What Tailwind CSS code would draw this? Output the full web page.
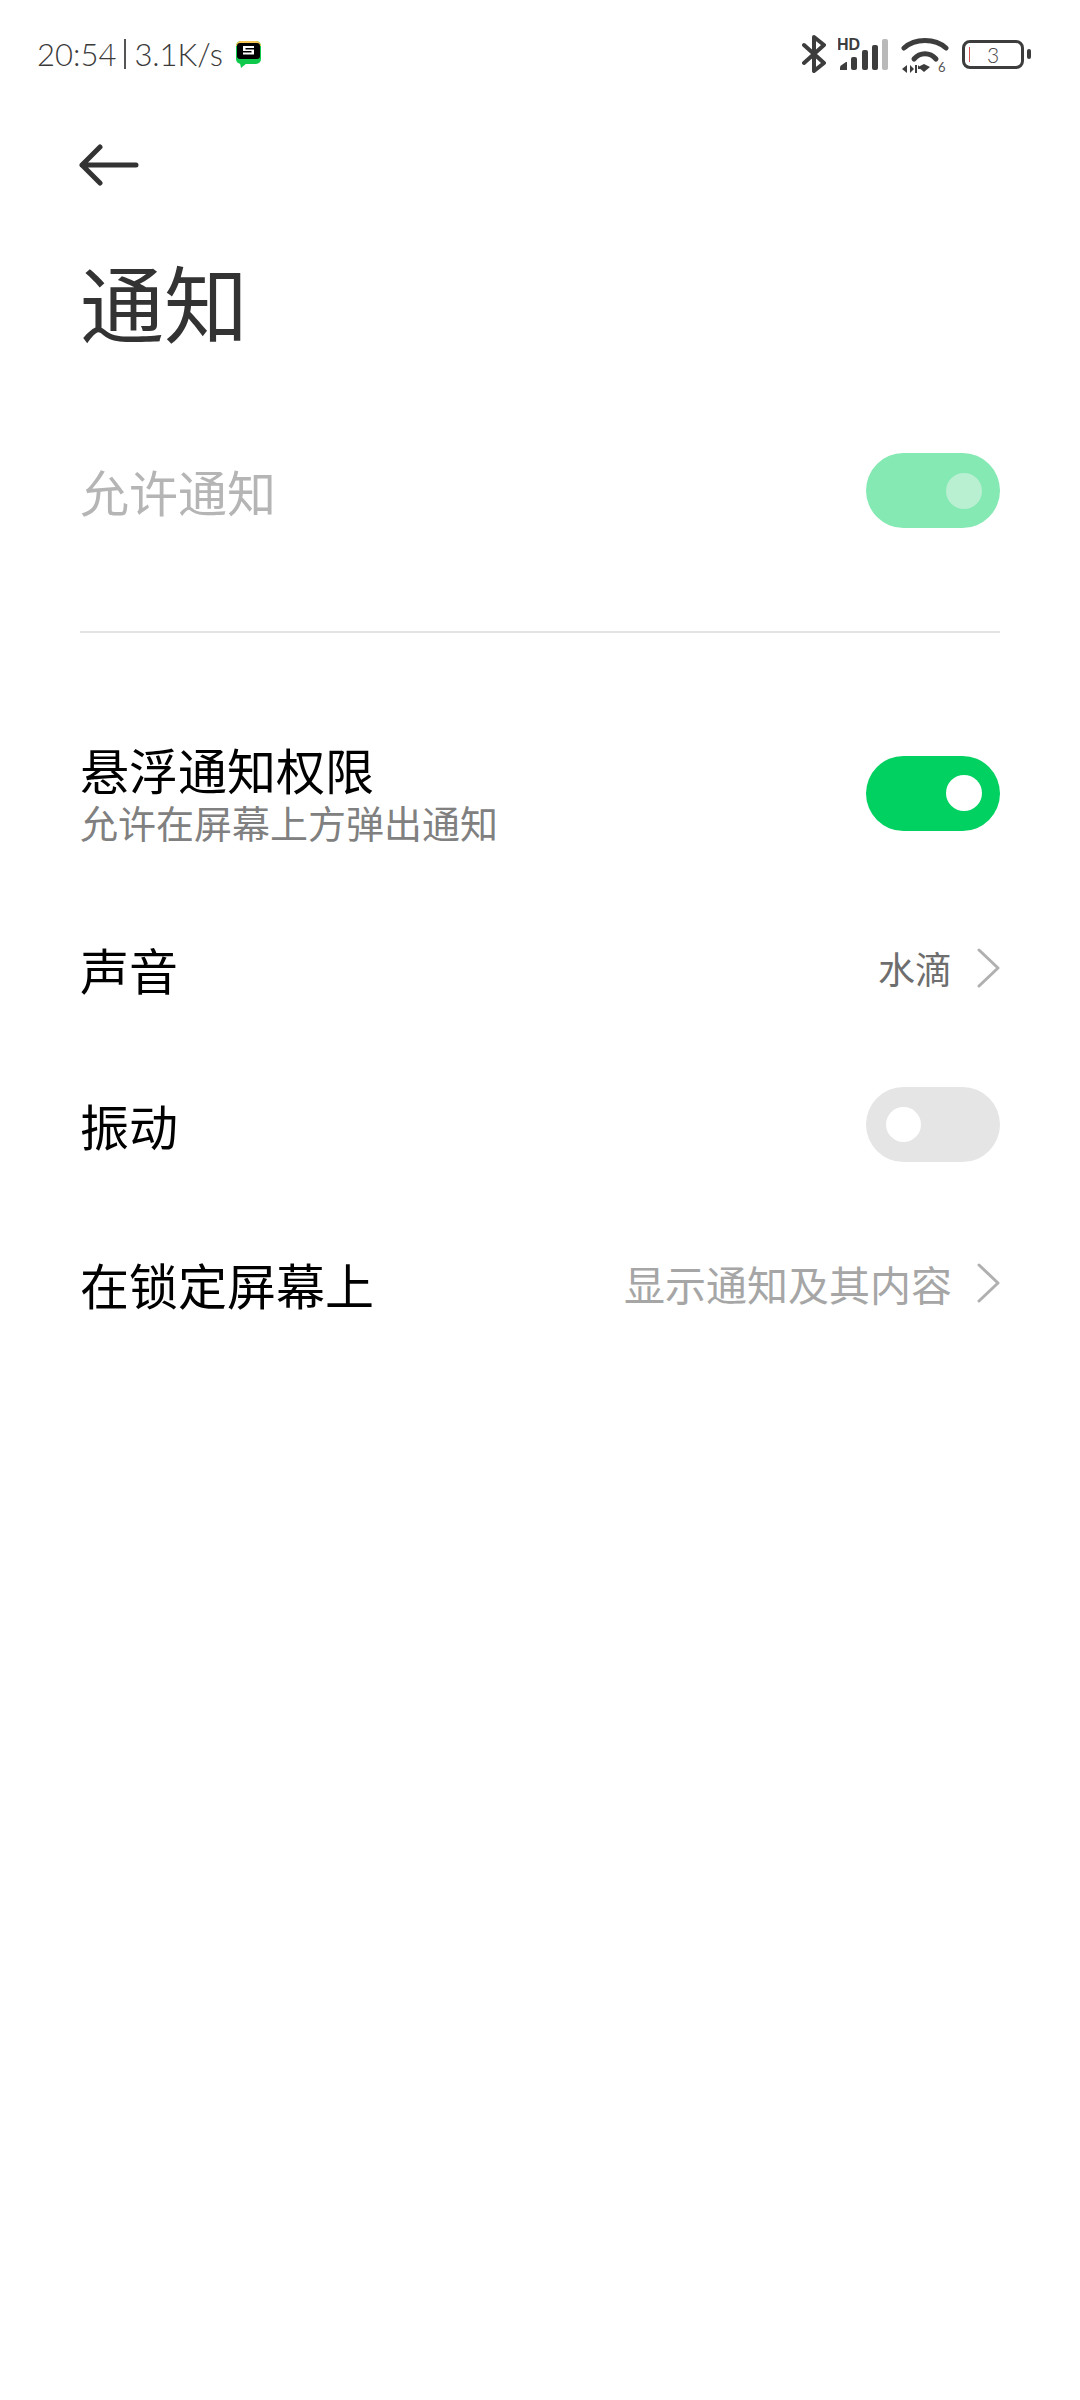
<!DOCTYPE html>
<html lang="zh-CN">
<head>
    <meta charset="UTF-8">
    <meta name="viewport" content="width=device-width, initial-scale=1.0">
    <title>通知</title>
    <script src="https://cdn.jsdelivr.net/npm/@tailwindcss/browser@4"></script>
</head>
<body class="bg-white w-[1080px] h-[2400px] overflow-hidden font-['Noto_Sans_CJK_SC','Noto_Sans',sans-serif]">
    <!-- Status bar -->
    <div class="h-[108px] pl-[37px] pr-[49px] flex items-center justify-between text-[#3a3a3a]">
        <div class="flex items-center">
            <span class="font-['Lato',sans-serif] font-light text-[31px] leading-none">20:54</span>
            <span class="w-[2px] h-[30px] bg-[#555] mx-[8px]"></span>
            <span class="font-['Lato',sans-serif] font-light text-[31px] leading-none">3.1K/s</span>
            <svg class="ml-[12px]" width="27" height="28" viewBox="0 0 27 28">
                <rect x="1" y="1" width="25" height="23" rx="5" fill="#0fc94d"/>
                <path d="M1 6a5 5 0 0 1 5-5h15a5 5 0 0 1 5 5z" fill="#f3c553"/>
                <path d="M5 23l1 5 6-5z" fill="#0fc94d"/>
                <rect x="2" y="3" width="23" height="16" rx="3" fill="#000"/>
                <path d="M8 6h11v2h-8.500v1.500h8.500v5h-11v-2h8.500v-1.500h-8.500z" fill="#fff"/>
            </svg>
        </div>
        <div class="flex items-center">
            <!-- bluetooth -->
            <svg width="24" height="38" viewBox="0 0 24 38" fill="none" stroke="#3d3d3d" stroke-width="4" stroke-linecap="round" stroke-linejoin="round">
                <path d="M2 10l20 18-10 8V2l10 8L2 28"/>
            </svg>
            <!-- HD signal -->
            <svg class="ml-[12px]" width="50" height="34" viewBox="0 0 50 34">
                <text x="-1" y="13" font-family="Liberation Sans" font-size="16" font-weight="700" fill="#3d3d3d">HD</text>
                <path d="M2 33v-2.500q0-1 1-2l5-3.500h1v8z" fill="#3d3d3d"/>
                <rect x="13" y="20" width="6" height="13" rx="2" fill="#3d3d3d"/>
                <rect x="24" y="13" width="6" height="20" rx="2" fill="#3d3d3d"/>
                <rect x="34" y="8" width="6" height="25" rx="2" fill="#3d3d3d"/>
                <rect x="44" y="2" width="6" height="31" rx="2" fill="#b9b9b9"/>
            </svg>
            <!-- wifi -->
            <svg class="ml-[13px] mt-[4px]" width="48" height="44" viewBox="0 -4 48 44" fill="none">
                <path d="M3 10C14 0 34 0 45 10" stroke="#3d3d3d" stroke-width="5" stroke-linecap="round"/>
                <path d="M13 21C19 14 29 14 35 21" stroke="#3d3d3d" stroke-width="5" stroke-linecap="round"/>
                <path d="M17 29l6-3 6 3-6 5z" fill="#3d3d3d"/>
                <path d="M6 27v8l-5-4zM9 27v8l4-4z" fill="#3d3d3d"/>
                <path d="M14 35v-8h2v8zM17 27l3 4h-3z" fill="#3d3d3d"/>
                <text x="37" y="34" font-family="Lato" font-size="13" fill="#555">6</text>
            </svg>
            <!-- battery -->
            <div class="ml-[13px] flex items-center">
                <div class="w-[62px] h-[29px] border-[3px] border-[#3d3d3d] rounded-[8px] flex items-center relative">
                    <span class="absolute left-[4px] w-[1px] h-[15px] bg-[#d9534f]"></span>
                    <span class="w-full text-center font-['Lato',sans-serif] font-light text-[21px] leading-none text-[#444]">3</span>
                </div>
                <span class="ml-[3px] w-[4px] h-[10px] rounded-full bg-[#3d3d3d]"></span>
            </div>
        </div>
    </div>

    <!-- Back arrow -->
    <div class="pl-[79px] h-[114px] flex items-center">
        <svg width="60" height="42" viewBox="0 0 60 42" fill="none" stroke="#333" stroke-width="5" stroke-linecap="round" stroke-linejoin="round">
            <path d="M57 21H3M21 3L3 21l18 18"/>
        </svg>
    </div>

    <div class="px-[80px]">
        <!-- Title -->
        <h1 class="h-[110px] flex items-center text-[84px] leading-none font-normal text-[#333] mt-[24px]">通知</h1>

        <!-- Allow notifications -->
        <div class="mt-[97px] h-[75px] flex items-center justify-between">
            <span class="text-[49px] leading-none text-[#b5b5b5]">允许通知</span>
            <div class="w-[134px] h-[75px] rounded-full bg-[#84e9b2] flex items-center justify-end pr-[18px]">
                <span class="w-[36px] h-[36px] rounded-full bg-[#b9f0d2]"></span>
            </div>
        </div>

        <div class="mt-[103px] h-[2px] bg-[#e3e3e3]"></div>

        <!-- Heads-up -->
        <div class="mt-[115px] h-[90px] flex items-center justify-between">
            <div class="flex flex-col">
                <span class="text-[49px] leading-[58px] text-black">悬浮通知权限</span>
                <span class="text-[38px] leading-[48px] text-[#808080]">允许在屏幕上方弹出通知</span>
            </div>
            <div class="w-[134px] h-[75px] rounded-full bg-[#00d161] flex items-center justify-end pr-[18px]">
                <span class="w-[36px] h-[36px] rounded-full bg-white"></span>
            </div>
        </div>

        <!-- Sound -->
        <div class="mt-[98px] h-[64px] flex items-center justify-between">
            <span class="text-[49px] leading-none text-black">声音</span>
            <div class="flex items-center">
                <span class="text-[37px] leading-none text-[#6e6e6e]">水滴</span>
                <svg class="ml-[24px]" width="24" height="40" viewBox="0 0 24 40" fill="none" stroke="#b0b0b0" stroke-width="3" stroke-linecap="round" stroke-linejoin="round">
                    <path d="M3 2l19 18L3 38"/>
                </svg>
            </div>
        </div>

        <!-- Vibrate -->
        <div class="mt-[87px] h-[75px] flex items-center justify-between">
            <span class="text-[49px] leading-none text-black">振动</span>
            <div class="w-[134px] h-[75px] rounded-full bg-[#e5e5e5] flex items-center pl-[20px]">
                <span class="w-[35px] h-[35px] rounded-full bg-white"></span>
            </div>
        </div>

        <!-- Lock screen -->
        <div class="mt-[89px] h-[64px] flex items-center justify-between">
            <span class="text-[49px] leading-none text-black">在锁定屏幕上</span>
            <div class="flex items-center">
                <span class="text-[41px] leading-none text-[#a6a6a6]">显示通知及其内容</span>
                <svg class="ml-[24px]" width="24" height="40" viewBox="0 0 24 40" fill="none" stroke="#b0b0b0" stroke-width="3" stroke-linecap="round" stroke-linejoin="round">
                    <path d="M3 2l19 18L3 38"/>
                </svg>
            </div>
        </div>
    </div>
</body>
</html>
